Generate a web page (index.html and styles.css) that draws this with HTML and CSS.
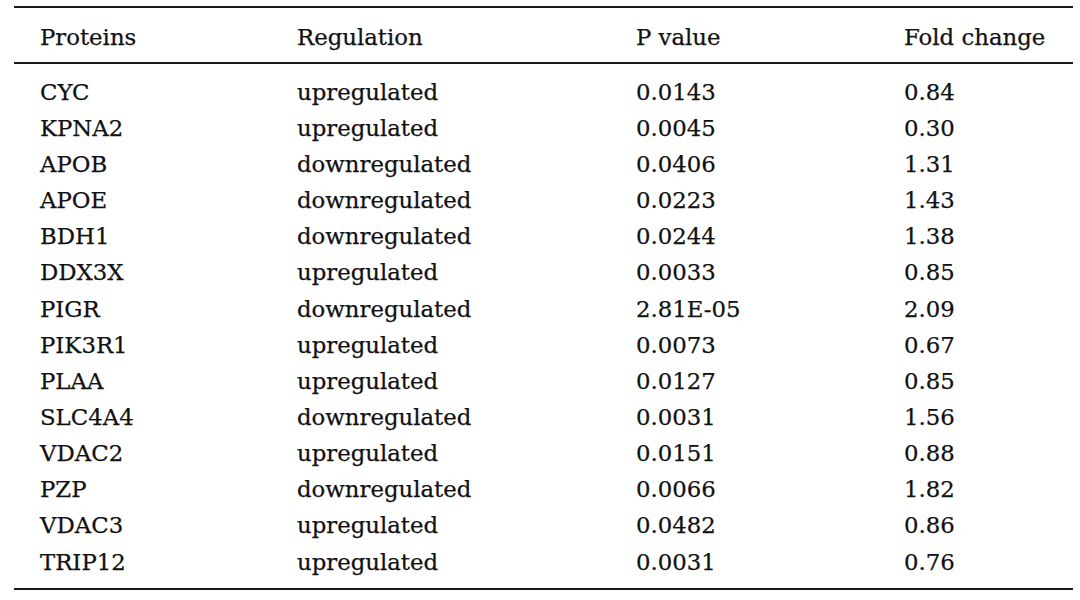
FILE: index.html
```html
<!DOCTYPE html>
<html>
<head>
<meta charset="utf-8">
<link rel="stylesheet" href="styles.css">
</head>
<body>
<div class="table">
  <div class="row head">
    <div class="cell">Proteins</div>
    <div class="cell">Regulation</div>
    <div class="cell">P value</div>
    <div class="cell">Fold change</div>
  </div>
  <div class="body">
    <div class="row"><div class="cell">CYC</div><div class="cell">upregulated</div><div class="cell">0.0143</div><div class="cell">0.84</div></div>
    <div class="row"><div class="cell">KPNA2</div><div class="cell">upregulated</div><div class="cell">0.0045</div><div class="cell">0.30</div></div>
    <div class="row"><div class="cell">APOB</div><div class="cell">downregulated</div><div class="cell">0.0406</div><div class="cell">1.31</div></div>
    <div class="row"><div class="cell">APOE</div><div class="cell">downregulated</div><div class="cell">0.0223</div><div class="cell">1.43</div></div>
    <div class="row"><div class="cell">BDH1</div><div class="cell">downregulated</div><div class="cell">0.0244</div><div class="cell">1.38</div></div>
    <div class="row"><div class="cell">DDX3X</div><div class="cell">upregulated</div><div class="cell">0.0033</div><div class="cell">0.85</div></div>
    <div class="row"><div class="cell">PIGR</div><div class="cell">downregulated</div><div class="cell">2.81E-05</div><div class="cell">2.09</div></div>
    <div class="row"><div class="cell">PIK3R1</div><div class="cell">upregulated</div><div class="cell">0.0073</div><div class="cell">0.67</div></div>
    <div class="row"><div class="cell">PLAA</div><div class="cell">upregulated</div><div class="cell">0.0127</div><div class="cell">0.85</div></div>
    <div class="row"><div class="cell">SLC4A4</div><div class="cell">downregulated</div><div class="cell">0.0031</div><div class="cell">1.56</div></div>
    <div class="row"><div class="cell">VDAC2</div><div class="cell">upregulated</div><div class="cell">0.0151</div><div class="cell">0.88</div></div>
    <div class="row"><div class="cell">PZP</div><div class="cell">downregulated</div><div class="cell">0.0066</div><div class="cell">1.82</div></div>
    <div class="row"><div class="cell">VDAC3</div><div class="cell">upregulated</div><div class="cell">0.0482</div><div class="cell">0.86</div></div>
    <div class="row"><div class="cell">TRIP12</div><div class="cell">upregulated</div><div class="cell">0.0031</div><div class="cell">0.76</div></div>
  </div>
</div>
</body>
</html>
```
FILE: styles.css
```css
html, body {
  margin: 0;
  padding: 0;
  background: #ffffff;
}
body {
  font-family: "DejaVu Serif", serif;
  font-size: 22.8px;
  color: #111111;
  -webkit-text-stroke: 0.25px #111111;
}
.table {
  margin: 6px 0 0 14px;
  width: 1059px;
  border-top: 2px solid #1a1a1a;
  border-bottom: 2px solid #1a1a1a;
}
.row {
  display: grid;
  grid-template-columns: 257px 339px 268px 1fr;
  height: 36.15px;
  align-items: center;
}
.row.head {
  height: 50px;
  padding-top: 4px;
  border-bottom: 2px solid #1a1a1a;
}
.body {
  padding: 10px 0 8px;
}
.cell {
  padding-left: 26px;
  white-space: nowrap;
  line-height: 1;
}
```
